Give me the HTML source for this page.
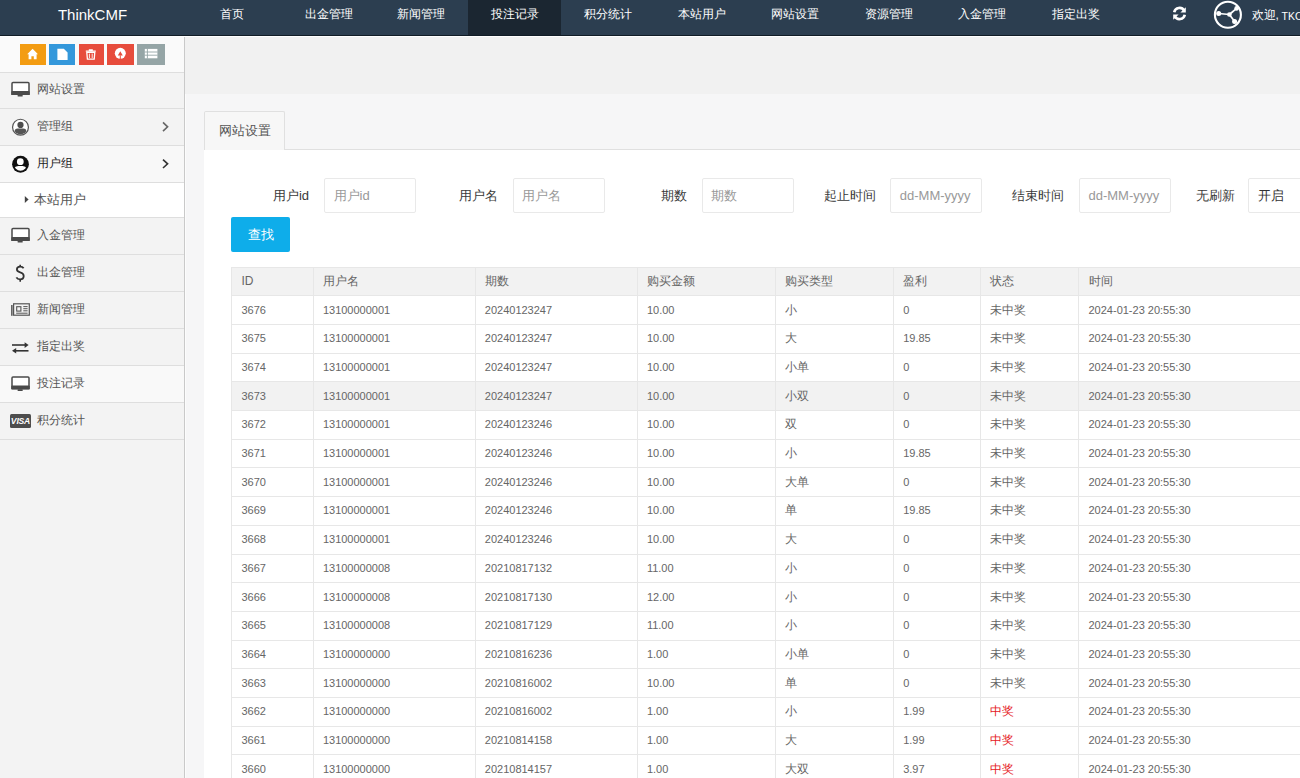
<!DOCTYPE html>
<html><head><meta charset="utf-8"><style>
*{box-sizing:border-box;margin:0;padding:0}
html,body{width:1300px;height:778px;overflow:hidden;background:#f6f6f7;font-family:"Liberation Sans",sans-serif;color:#555}
div{position:absolute}
svg{position:absolute;overflow:visible}
.nav{top:0;height:35px;line-height:28px;color:#fff;font-size:12px;white-space:nowrap}
.sb{top:43.7px;height:21.8px}
.mt{left:37px;line-height:14px;font-size:12px;white-space:nowrap}
.lab{font-size:13px;color:#3a3a3a;line-height:15px;white-space:nowrap;text-align:right;top:187.5px;width:100px}
.inp{top:177.6px;height:35px;width:92px;border:1px solid #e9e9e9;border-radius:2px;background:#fff;font-size:13px;color:#999;line-height:33px;padding-left:8.5px;white-space:nowrap;overflow:hidden}
.hl{height:1px;background:#e7e7e7}
.vl{width:1px;background:#e7e7e7}
.c{font-size:11px;color:#666;white-space:nowrap;line-height:14px}
.cj{font-size:12px}
.red{color:#e5181e}
</style></head><body>
<div style="left:0;top:0;width:1300px;height:35px;background:#2c3e50"></div>
<div style="left:0;top:35px;width:1300px;height:1px;background:#111c26"></div>
<div style="left:468px;top:0;width:93px;height:35px;background:#1b2631"></div>
<div style="left:0;top:0;width:185px;height:35px;line-height:29px;text-align:center;color:#fff;font-size:15px">ThinkCMF</div>
<div class="nav" style="left:220.4px">首页</div>
<div class="nav" style="left:304.6px">出金管理</div>
<div class="nav" style="left:397px">新闻管理</div>
<div class="nav" style="left:491px">投注记录</div>
<div class="nav" style="left:584px">积分统计</div>
<div class="nav" style="left:678px">本站用户</div>
<div class="nav" style="left:771px">网站设置</div>
<div class="nav" style="left:865px">资源管理</div>
<div class="nav" style="left:958px">入金管理</div>
<div class="nav" style="left:1052px">指定出奖</div>
<svg style="left:1172px;top:6px" width="15" height="15" viewBox="0 0 15 15"><g fill="none" stroke="#fff" stroke-width="2.6"><path d="M2.2 6.2 A5.4 5.4 0 0 1 12.2 4.6"/><path d="M12.8 8.8 A5.4 5.4 0 0 1 2.8 10.4"/></g><path d="M13.8 1.2 V6.6 H8.4 Z" fill="#fff"/><path d="M1.2 13.8 V8.4 H6.6 Z" fill="#fff"/></svg>
<svg style="left:1213px;top:0px" width="30" height="30" viewBox="0 0 30 30"><circle cx="14.9" cy="14.8" r="13" fill="none" stroke="#fff" stroke-width="2.1"/><g stroke="#fff" stroke-width="1.7"><line x1="5.7" y1="13.5" x2="16.4" y2="14.5"/><line x1="16.4" y1="14.5" x2="23.6" y2="8.4"/><line x1="16.4" y1="14.5" x2="21.6" y2="21.5"/></g><g fill="#fff"><circle cx="5.7" cy="13.5" r="2.5"/><circle cx="16.4" cy="14.5" r="2.3"/><circle cx="23.6" cy="8.4" r="2.3"/><circle cx="21.6" cy="21.5" r="2.5"/></g></svg>
<div class="nav" style="left:1251.5px;top:1.3px">欢迎,</div><div class="nav" style="left:1281.5px;top:1px;font-size:10.5px;line-height:31px">TKO000</div>
<div style="left:0;top:36px;width:184px;height:742px;background:#f3f3f3"></div>
<div style="left:184px;top:36px;width:1px;height:742px;background:#c9c9c9"></div>
<div style="left:0;top:36px;width:184px;height:36px;background:#fafafa"></div>
<div class="sb" style="left:19.5px;width:26.6px;background:#f39c12"></div>
<div class="sb" style="left:49.2px;width:25.7px;background:#3498db"></div>
<div class="sb" style="left:79px;width:24.8px;background:#e74c3c"></div>
<div class="sb" style="left:106.7px;width:27.1px;background:#e74c3c"></div>
<div class="sb" style="left:137.2px;width:27.4px;background:#95a5a6"></div>
<svg style="left:0;top:0" width="184" height="72" viewBox="0 0 184 72"><g fill="#fff">
<path d="M32.6 48.8 L27.2 54.2 L28.6 54.2 L28.6 59.2 L31.4 59.2 L31.4 56.2 L33.8 56.2 L33.8 59.2 L36.6 59.2 L36.6 54.2 L38 54.2 Z"/>
<path d="M57.4 48.8 H63.8 L67.6 52.6 V60 H57.4 Z"/>
<path d="M85.8 50.6 H95.8 V51.8 H85.8 Z M88.8 49.2 H92.8 V50.8 H88.8 Z"/>
<path d="M86.8 52.4 H94.8 L94.2 59.2 H87.4 Z" fill="none" stroke="#fff" stroke-width="1.3"/>
<path d="M89.4 53.6 V58 M92.2 53.6 V58" stroke="#fff" stroke-width="0.9"/>
<circle cx="120.3" cy="53.3" r="5.5"/>
<path d="M144.8 48.9 H157.4 V58.3 H144.8 Z"/>
</g>
<path d="M120.3 51.2 L122.8 55.4 H117.8 Z" fill="#e74c3c"/><rect x="119.8" y="55.3" width="1" height="4" fill="#e74c3c"/>
<path d="M144.6 52 H157.6 M144.6 55.2 H157.6 M147.4 48.6 V58.6" stroke="#95a5a6" stroke-width="0.9"/>
</svg>
<div style="left:0;top:72.0px;width:184px;height:36.3px;background:#f3f3f3"></div>
<div style="left:0;top:108.3px;width:184px;height:37.1px;background:#f3f3f3"></div>
<div style="left:0;top:145.4px;width:184px;height:37.0px;background:#f8f8f8"></div>
<div style="left:0;top:182.4px;width:184px;height:35.0px;background:#ffffff"></div>
<div style="left:0;top:217.4px;width:184px;height:36.8px;background:#f3f3f3"></div>
<div style="left:0;top:254.2px;width:184px;height:37.1px;background:#f3f3f3"></div>
<div style="left:0;top:291.3px;width:184px;height:37.1px;background:#f3f3f3"></div>
<div style="left:0;top:328.4px;width:184px;height:36.9px;background:#f3f3f3"></div>
<div style="left:0;top:365.3px;width:184px;height:37.2px;background:#f9f9f9"></div>
<div style="left:0;top:402.5px;width:184px;height:36.4px;background:#f3f3f3"></div>
<div style="left:0;top:72px;width:184px;height:1px;background:#dedede"></div>
<div style="left:0;top:108px;width:184px;height:1px;background:#dedede"></div>
<div style="left:0;top:145px;width:184px;height:1px;background:#dedede"></div>
<div style="left:0;top:182px;width:184px;height:1px;background:#dedede"></div>
<div style="left:0;top:217px;width:184px;height:1px;background:#dedede"></div>
<div style="left:0;top:254px;width:184px;height:1px;background:#dedede"></div>
<div style="left:0;top:291px;width:184px;height:1px;background:#dedede"></div>
<div style="left:0;top:328px;width:184px;height:1px;background:#dedede"></div>
<div style="left:0;top:365px;width:184px;height:1px;background:#dedede"></div>
<div style="left:0;top:402px;width:184px;height:1px;background:#dedede"></div>
<div style="left:0;top:439px;width:184px;height:1px;background:#dedede"></div>
<div class="mt" style="left:37px;top:82.1px;color:#555">网站设置</div>
<div class="mt" style="left:37px;top:118.8px;color:#555">管理组</div>
<div class="mt" style="left:37px;top:155.8px;color:#222">用户组</div>
<div class="mt" style="left:34.4px;top:191.8px;color:#555;font-size:13px;line-height:15px">本站用户</div>
<div class="mt" style="left:37px;top:227.7px;color:#555">入金管理</div>
<div class="mt" style="left:37px;top:264.6px;color:#555">出金管理</div>
<div class="mt" style="left:37px;top:301.8px;color:#555">新闻管理</div>
<div class="mt" style="left:37px;top:338.8px;color:#555">指定出奖</div>
<div class="mt" style="left:37px;top:375.8px;color:#555">投注记录</div>
<div class="mt" style="left:37px;top:412.6px;color:#555">积分统计</div>
<svg style="left:0;top:0" width="184" height="460" viewBox="0 0 184 460"><path d="M13 82.55 H28 Q29 82.55 29 83.55 V94.2 H12 V83.55 Q12 82.55 13 82.55 Z" fill="#fff" stroke="#4a4a4a" stroke-width="1.5"/><rect x="11.3" y="91.0" width="18.4" height="4" rx="1" fill="#4a4a4a"/><rect x="17.6" y="94.8" width="5.1" height="1.8" rx="0.6" fill="#4a4a4a"/><path d="M13 228.55 H28 Q29 228.55 29 229.55 V240.20000000000002 H12 V229.55 Q12 228.55 13 228.55 Z" fill="#fff" stroke="#4a4a4a" stroke-width="1.5"/><rect x="11.3" y="237.0" width="18.4" height="4" rx="1" fill="#4a4a4a"/><rect x="17.6" y="240.8" width="5.1" height="1.8" rx="0.6" fill="#4a4a4a"/><path d="M13 376.95 H28 Q29 376.95 29 377.95 V388.59999999999997 H12 V377.95 Q12 376.95 13 376.95 Z" fill="#fff" stroke="#4a4a4a" stroke-width="1.5"/><rect x="11.3" y="385.4" width="18.4" height="4" rx="1" fill="#4a4a4a"/><rect x="17.6" y="389.2" width="5.1" height="1.8" rx="0.6" fill="#4a4a4a"/><circle cx="20.5" cy="127.2" r="7.95" fill="#fff" stroke="#555" stroke-width="1.2"/><circle cx="20.5" cy="124.9" r="3.1" fill="#4d4d4d"/><clipPath id="cg"><circle cx="20.5" cy="127.2" r="7.2"/></clipPath><path d="M14.6 136 V131.2 Q14.8 128.6 17.6 128.6 H23.4 Q26.2 128.6 26.4 131.2 V136 Z" fill="#555" clip-path="url(#cg)"/><circle cx="20.5" cy="164.25" r="8.4" fill="#111"/><circle cx="20.3" cy="161.7" r="3.4" fill="#fff"/><clipPath id="cb"><circle cx="20.5" cy="164.25" r="6.5"/></clipPath><path d="M14 172 V168.6 Q15 166.1 18.2 166.1 H22.6 Q25.8 166.1 26.6 168.6 V172 Z" fill="#fff" clip-path="url(#cb)"/><path d="M163 122.4 L167.6 126.8 L163 131.2" fill="none" stroke="#666" stroke-width="1.6"/><path d="M163 159.6 L167.6 163.8 L163 168" fill="none" stroke="#333" stroke-width="1.6"/><path d="M24.8 196 L28.6 199.5 L24.8 203 Z" fill="#444"/><path d="M23.6 268.2 Q22.6 266.6 20.2 266.6 Q16.9 266.6 16.9 269.3 Q16.9 271.6 20.2 272.4 Q23.7 273.3 23.7 276.1 Q23.7 279.4 20.2 279.4 Q17.4 279.4 16.4 277.4" fill="none" stroke="#333" stroke-width="1.8"/><path d="M20.2 264.7 V266.8 M20.2 279.2 V281.7" stroke="#333" stroke-width="1.6"/><rect x="13.6" y="303.8" width="15.7" height="11.4" fill="none" stroke="#555" stroke-width="1.2"/><rect x="11.1" y="305" width="1.5" height="10.8" fill="#555"/><rect x="16.7" y="306.7" width="4.2" height="4.4" fill="none" stroke="#555" stroke-width="1.1"/><path d="M23.3 306.6 H27.6 M23.3 308.7 H27.6 M23.3 310.8 H27.6 M16.2 313.2 H27.6" stroke="#555" stroke-width="1"/><path d="M12 345 H25" stroke="#333" stroke-width="1.6"/><path d="M24.6 342.2 L28.6 345 L24.6 347.9 Z" fill="#333"/><path d="M15.8 350.8 H28.5" stroke="#333" stroke-width="1.6"/><path d="M16.2 348 L12 350.8 L16.2 353.6 Z" fill="#333"/></svg>
<div style="left:10px;top:414.3px;width:21px;height:13.6px;background:#4d4d4d;border-radius:1.5px"></div>
<div style="left:10px;top:415.6px;width:21px;height:10px;color:#fff;font-size:8.6px;font-weight:bold;font-style:italic;line-height:10px;text-align:center;letter-spacing:-0.2px">VISA</div>
<div style="left:185px;top:36px;width:1115px;height:58px;background:#f1f1f1"></div>
<div style="left:0;top:36px;width:1300px;height:1px;background:#fff"></div>
<div style="left:185px;top:94px;width:1px;height:684px;background:#fcfcfc"></div>
<div style="left:203.5px;top:150px;width:1097px;height:628px;background:#fff"></div>
<div style="left:204px;top:111px;width:81px;height:39px;background:#f7f7f7;border:1px solid #e0e0e0;border-bottom:none;border-radius:2px 2px 0 0"></div>
<div style="left:285px;top:149px;width:1015px;height:1px;background:#e0e0e0"></div>
<div class="mt" style="left:218.5px;top:123px;color:#555;font-size:13px;line-height:15px">网站设置</div>
<div class="lab" style="left:209px">用户id</div>
<div class="lab" style="left:398px">用户名</div>
<div class="lab" style="left:587.3px">期数</div>
<div class="lab" style="left:776px">起止时间</div>
<div class="lab" style="left:964.4000000000001px">结束时间</div>
<div class="lab" style="left:1134.8px">无刷新</div>
<div class="inp" style="left:324px">用户id</div>
<div class="inp" style="left:512.6px">用户名</div>
<div class="inp" style="left:701.7px">期数</div>
<div class="inp" style="left:890.3px">dd-MM-yyyy</div>
<div class="inp" style="left:1079px">dd-MM-yyyy</div>
<div class="inp" style="left:1248.4px;width:80px;color:#333">开启</div>
<div style="left:231px;top:217.3px;width:59px;height:35px;background:#0eadea;border-radius:2px;color:#fff;font-size:13px;line-height:35px;text-align:center">查找</div>
<div style="left:231.4px;top:266.6px;width:1068.6px;height:28.69px;background:#f2f2f2"></div>
<div style="left:231.4px;top:381.36px;width:1068.6px;height:28.69px;background:#f2f2f2"></div>
<div class="hl" style="left:231px;top:267px;width:1069px"></div>
<div class="hl" style="left:231px;top:295px;width:1069px"></div>
<div class="hl" style="left:231px;top:324px;width:1069px"></div>
<div class="hl" style="left:231px;top:353px;width:1069px"></div>
<div class="hl" style="left:231px;top:381px;width:1069px"></div>
<div class="hl" style="left:231px;top:410px;width:1069px"></div>
<div class="hl" style="left:231px;top:439px;width:1069px"></div>
<div class="hl" style="left:231px;top:467px;width:1069px"></div>
<div class="hl" style="left:231px;top:496px;width:1069px"></div>
<div class="hl" style="left:231px;top:525px;width:1069px"></div>
<div class="hl" style="left:231px;top:554px;width:1069px"></div>
<div class="hl" style="left:231px;top:582px;width:1069px"></div>
<div class="hl" style="left:231px;top:611px;width:1069px"></div>
<div class="hl" style="left:231px;top:640px;width:1069px"></div>
<div class="hl" style="left:231px;top:668px;width:1069px"></div>
<div class="hl" style="left:231px;top:697px;width:1069px"></div>
<div class="hl" style="left:231px;top:726px;width:1069px"></div>
<div class="hl" style="left:231px;top:754px;width:1069px"></div>
<div class="hl" style="left:231px;top:783px;width:1069px"></div>
<div class="vl" style="left:231px;top:267px;height:516px"></div>
<div class="vl" style="left:313px;top:267px;height:516px"></div>
<div class="vl" style="left:475px;top:267px;height:516px"></div>
<div class="vl" style="left:637px;top:267px;height:516px"></div>
<div class="vl" style="left:775px;top:267px;height:516px"></div>
<div class="vl" style="left:893px;top:267px;height:516px"></div>
<div class="vl" style="left:980px;top:267px;height:516px"></div>
<div class="vl" style="left:1078px;top:267px;height:516px"></div>
<div class="c cj" style="left:241.4px;top:273.95px">ID</div>
<div class="c cj" style="left:322.9px;top:273.95px">用户名</div>
<div class="c cj" style="left:484.8px;top:273.95px">期数</div>
<div class="c cj" style="left:646.9px;top:273.95px">购买金额</div>
<div class="c cj" style="left:784.8px;top:273.95px">购买类型</div>
<div class="c cj" style="left:903.2px;top:273.95px">盈利</div>
<div class="c cj" style="left:990.0px;top:273.95px">状态</div>
<div class="c cj" style="left:1088.5px;top:273.95px">时间</div>
<div class="c" style="left:241.4px;top:302.64px">3676</div>
<div class="c" style="left:322.9px;top:302.64px">13100000001</div>
<div class="c" style="left:484.8px;top:302.64px">20240123247</div>
<div class="c" style="left:646.9px;top:302.64px">10.00</div>
<div class="c cj" style="left:784.8px;top:302.64px">小</div>
<div class="c" style="left:903.2px;top:302.64px">0</div>
<div class="c cj" style="left:990.0px;top:302.64px">未中奖</div>
<div class="c" style="left:1088.5px;top:302.64px">2024-01-23 20:55:30</div>
<div class="c" style="left:241.4px;top:331.33px">3675</div>
<div class="c" style="left:322.9px;top:331.33px">13100000001</div>
<div class="c" style="left:484.8px;top:331.33px">20240123247</div>
<div class="c" style="left:646.9px;top:331.33px">10.00</div>
<div class="c cj" style="left:784.8px;top:331.33px">大</div>
<div class="c" style="left:903.2px;top:331.33px">19.85</div>
<div class="c cj" style="left:990.0px;top:331.33px">未中奖</div>
<div class="c" style="left:1088.5px;top:331.33px">2024-01-23 20:55:30</div>
<div class="c" style="left:241.4px;top:360.02px">3674</div>
<div class="c" style="left:322.9px;top:360.02px">13100000001</div>
<div class="c" style="left:484.8px;top:360.02px">20240123247</div>
<div class="c" style="left:646.9px;top:360.02px">10.00</div>
<div class="c cj" style="left:784.8px;top:360.02px">小单</div>
<div class="c" style="left:903.2px;top:360.02px">0</div>
<div class="c cj" style="left:990.0px;top:360.02px">未中奖</div>
<div class="c" style="left:1088.5px;top:360.02px">2024-01-23 20:55:30</div>
<div class="c" style="left:241.4px;top:388.71px">3673</div>
<div class="c" style="left:322.9px;top:388.71px">13100000001</div>
<div class="c" style="left:484.8px;top:388.71px">20240123247</div>
<div class="c" style="left:646.9px;top:388.71px">10.00</div>
<div class="c cj" style="left:784.8px;top:388.71px">小双</div>
<div class="c" style="left:903.2px;top:388.71px">0</div>
<div class="c cj" style="left:990.0px;top:388.71px">未中奖</div>
<div class="c" style="left:1088.5px;top:388.71px">2024-01-23 20:55:30</div>
<div class="c" style="left:241.4px;top:417.40px">3672</div>
<div class="c" style="left:322.9px;top:417.40px">13100000001</div>
<div class="c" style="left:484.8px;top:417.40px">20240123246</div>
<div class="c" style="left:646.9px;top:417.40px">10.00</div>
<div class="c cj" style="left:784.8px;top:417.40px">双</div>
<div class="c" style="left:903.2px;top:417.40px">0</div>
<div class="c cj" style="left:990.0px;top:417.40px">未中奖</div>
<div class="c" style="left:1088.5px;top:417.40px">2024-01-23 20:55:30</div>
<div class="c" style="left:241.4px;top:446.09px">3671</div>
<div class="c" style="left:322.9px;top:446.09px">13100000001</div>
<div class="c" style="left:484.8px;top:446.09px">20240123246</div>
<div class="c" style="left:646.9px;top:446.09px">10.00</div>
<div class="c cj" style="left:784.8px;top:446.09px">小</div>
<div class="c" style="left:903.2px;top:446.09px">19.85</div>
<div class="c cj" style="left:990.0px;top:446.09px">未中奖</div>
<div class="c" style="left:1088.5px;top:446.09px">2024-01-23 20:55:30</div>
<div class="c" style="left:241.4px;top:474.78px">3670</div>
<div class="c" style="left:322.9px;top:474.78px">13100000001</div>
<div class="c" style="left:484.8px;top:474.78px">20240123246</div>
<div class="c" style="left:646.9px;top:474.78px">10.00</div>
<div class="c cj" style="left:784.8px;top:474.78px">大单</div>
<div class="c" style="left:903.2px;top:474.78px">0</div>
<div class="c cj" style="left:990.0px;top:474.78px">未中奖</div>
<div class="c" style="left:1088.5px;top:474.78px">2024-01-23 20:55:30</div>
<div class="c" style="left:241.4px;top:503.47px">3669</div>
<div class="c" style="left:322.9px;top:503.47px">13100000001</div>
<div class="c" style="left:484.8px;top:503.47px">20240123246</div>
<div class="c" style="left:646.9px;top:503.47px">10.00</div>
<div class="c cj" style="left:784.8px;top:503.47px">单</div>
<div class="c" style="left:903.2px;top:503.47px">19.85</div>
<div class="c cj" style="left:990.0px;top:503.47px">未中奖</div>
<div class="c" style="left:1088.5px;top:503.47px">2024-01-23 20:55:30</div>
<div class="c" style="left:241.4px;top:532.16px">3668</div>
<div class="c" style="left:322.9px;top:532.16px">13100000001</div>
<div class="c" style="left:484.8px;top:532.16px">20240123246</div>
<div class="c" style="left:646.9px;top:532.16px">10.00</div>
<div class="c cj" style="left:784.8px;top:532.16px">大</div>
<div class="c" style="left:903.2px;top:532.16px">0</div>
<div class="c cj" style="left:990.0px;top:532.16px">未中奖</div>
<div class="c" style="left:1088.5px;top:532.16px">2024-01-23 20:55:30</div>
<div class="c" style="left:241.4px;top:560.85px">3667</div>
<div class="c" style="left:322.9px;top:560.85px">13100000008</div>
<div class="c" style="left:484.8px;top:560.85px">20210817132</div>
<div class="c" style="left:646.9px;top:560.85px">11.00</div>
<div class="c cj" style="left:784.8px;top:560.85px">小</div>
<div class="c" style="left:903.2px;top:560.85px">0</div>
<div class="c cj" style="left:990.0px;top:560.85px">未中奖</div>
<div class="c" style="left:1088.5px;top:560.85px">2024-01-23 20:55:30</div>
<div class="c" style="left:241.4px;top:589.54px">3666</div>
<div class="c" style="left:322.9px;top:589.54px">13100000008</div>
<div class="c" style="left:484.8px;top:589.54px">20210817130</div>
<div class="c" style="left:646.9px;top:589.54px">12.00</div>
<div class="c cj" style="left:784.8px;top:589.54px">小</div>
<div class="c" style="left:903.2px;top:589.54px">0</div>
<div class="c cj" style="left:990.0px;top:589.54px">未中奖</div>
<div class="c" style="left:1088.5px;top:589.54px">2024-01-23 20:55:30</div>
<div class="c" style="left:241.4px;top:618.23px">3665</div>
<div class="c" style="left:322.9px;top:618.23px">13100000008</div>
<div class="c" style="left:484.8px;top:618.23px">20210817129</div>
<div class="c" style="left:646.9px;top:618.23px">11.00</div>
<div class="c cj" style="left:784.8px;top:618.23px">小</div>
<div class="c" style="left:903.2px;top:618.23px">0</div>
<div class="c cj" style="left:990.0px;top:618.23px">未中奖</div>
<div class="c" style="left:1088.5px;top:618.23px">2024-01-23 20:55:30</div>
<div class="c" style="left:241.4px;top:646.92px">3664</div>
<div class="c" style="left:322.9px;top:646.92px">13100000000</div>
<div class="c" style="left:484.8px;top:646.92px">20210816236</div>
<div class="c" style="left:646.9px;top:646.92px">1.00</div>
<div class="c cj" style="left:784.8px;top:646.92px">小单</div>
<div class="c" style="left:903.2px;top:646.92px">0</div>
<div class="c cj" style="left:990.0px;top:646.92px">未中奖</div>
<div class="c" style="left:1088.5px;top:646.92px">2024-01-23 20:55:30</div>
<div class="c" style="left:241.4px;top:675.61px">3663</div>
<div class="c" style="left:322.9px;top:675.61px">13100000000</div>
<div class="c" style="left:484.8px;top:675.61px">20210816002</div>
<div class="c" style="left:646.9px;top:675.61px">10.00</div>
<div class="c cj" style="left:784.8px;top:675.61px">单</div>
<div class="c" style="left:903.2px;top:675.61px">0</div>
<div class="c cj" style="left:990.0px;top:675.61px">未中奖</div>
<div class="c" style="left:1088.5px;top:675.61px">2024-01-23 20:55:30</div>
<div class="c" style="left:241.4px;top:704.30px">3662</div>
<div class="c" style="left:322.9px;top:704.30px">13100000000</div>
<div class="c" style="left:484.8px;top:704.30px">20210816002</div>
<div class="c" style="left:646.9px;top:704.30px">1.00</div>
<div class="c cj" style="left:784.8px;top:704.30px">小</div>
<div class="c" style="left:903.2px;top:704.30px">1.99</div>
<div class="c cj red" style="left:990.0px;top:704.30px">中奖</div>
<div class="c" style="left:1088.5px;top:704.30px">2024-01-23 20:55:30</div>
<div class="c" style="left:241.4px;top:732.99px">3661</div>
<div class="c" style="left:322.9px;top:732.99px">13100000000</div>
<div class="c" style="left:484.8px;top:732.99px">20210814158</div>
<div class="c" style="left:646.9px;top:732.99px">1.00</div>
<div class="c cj" style="left:784.8px;top:732.99px">大</div>
<div class="c" style="left:903.2px;top:732.99px">1.99</div>
<div class="c cj red" style="left:990.0px;top:732.99px">中奖</div>
<div class="c" style="left:1088.5px;top:732.99px">2024-01-23 20:55:30</div>
<div class="c" style="left:241.4px;top:761.68px">3660</div>
<div class="c" style="left:322.9px;top:761.68px">13100000000</div>
<div class="c" style="left:484.8px;top:761.68px">20210814157</div>
<div class="c" style="left:646.9px;top:761.68px">1.00</div>
<div class="c cj" style="left:784.8px;top:761.68px">大双</div>
<div class="c" style="left:903.2px;top:761.68px">3.97</div>
<div class="c cj red" style="left:990.0px;top:761.68px">中奖</div>
<div class="c" style="left:1088.5px;top:761.68px">2024-01-23 20:55:30</div>
</body></html>
